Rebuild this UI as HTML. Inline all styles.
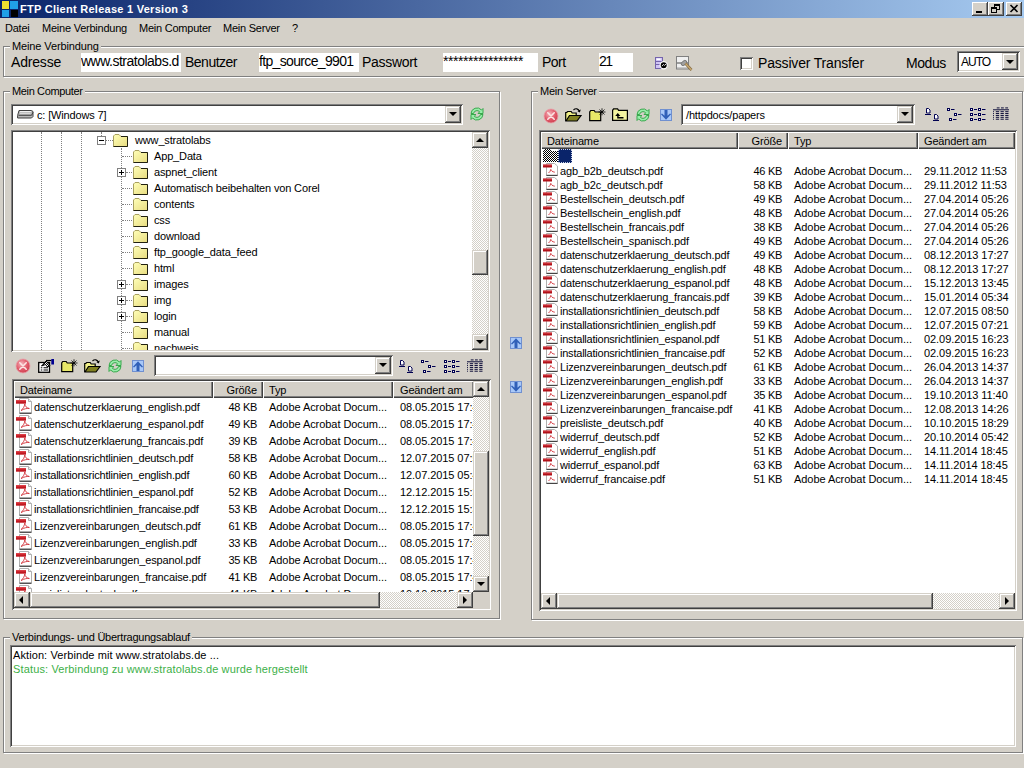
<!DOCTYPE html>
<html lang="de"><head><meta charset="utf-8"><title>FTP Client Release 1 Version 3</title>
<style>
*{box-sizing:border-box;margin:0;padding:0}
html,body{width:1024px;height:768px;overflow:hidden;background:#d4d0c8}
body{position:relative;font-family:"Liberation Sans","DejaVu Sans",sans-serif;font-size:11px;color:#000;line-height:14px}
.a{position:absolute;white-space:pre}
.t{letter-spacing:-.23px}
.l{letter-spacing:-.15px}
.big{font-size:14px;line-height:20px;letter-spacing:-.18px}
.inp{background:#fff;height:19px;top:53px;font-size:14px;line-height:17px;overflow:hidden;padding-left:0;letter-spacing:-.5px}
.title{left:0;top:0;width:1024px;height:18px;background:linear-gradient(90deg,#0a246a 0%,#a6caf0 100%)}
.title span{left:20px;top:0;color:#fff;font-weight:bold;font-size:11px;line-height:18px;letter-spacing:.27px}
.cb{width:16px;height:14px;top:2px;background:#d4d0c8;box-shadow:inset -1px -1px 0 #404040,inset 1px 1px 0 #fff,inset -2px -2px 0 #808080,inset 2px 2px 0 #d4d0c8}
.gb{border:1px solid #808080;box-shadow:inset 1px 1px 0 #fff,1px 1px 0 #fff}
.gl{background:#d4d0c8;padding:0 2px;line-height:14px}
.sunk{background:#fff;box-shadow:inset 1px 1px 0 #808080,inset -1px -1px 0 #fff,inset 2px 2px 0 #404040,inset -2px -2px 0 #d4d0c8}
.btn{background:#d4d0c8;box-shadow:inset -1px -1px 0 #404040,inset 1px 1px 0 #d4d0c8,inset -2px -2px 0 #808080,inset 2px 2px 0 #fff}
.trk{background:repeating-conic-gradient(#fff 0% 25%,#d4d0c8 0% 50%) 0 0/2px 2px}
.hd{background:#d4d0c8;height:17px;line-height:14px;box-shadow:inset 1px 1px 0 #fff,inset -1px -1px 0 #404040,inset -2px -2px 0 #808080;padding-top:2px}
.ar{width:0;height:0;border:4px solid transparent}
.ar.d{border-top-color:#000;border-bottom:0;border-left-width:4px;border-right-width:4px}
.ar.u{border-bottom-color:#000;border-top:0}
.ar.r{border-left-color:#000;border-right:0}
.ar.lf{border-right-color:#000;border-left:0}
.vd{width:0;border-left:1px dotted #808080}
.hdot{height:0;border-top:1px dotted #808080}
.pm{width:9px;height:9px;border:1px solid #808080;background:#fff}
.pm i{position:absolute;left:1px;top:3px;width:5px;height:1px;background:#000}
.pm b{position:absolute;left:3px;top:1px;width:1px;height:5px;background:#000}
.r{text-align:right}
svg{position:absolute;overflow:visible}
</style></head>
<body>
<svg width="0" height="0" style="left:0;top:0"><defs>
<pattern id="chk" width="2" height="2" patternUnits="userSpaceOnUse"><rect width="2" height="2" fill="#fff"/><rect width="1" height="1" fill="#000"/><rect x="1" y="1" width="1" height="1" fill="#000"/></pattern>
<linearGradient id="fg" x1="0" y1="0" x2="1" y2="1"><stop offset="0" stop-color="#ffffb8"/><stop offset="1" stop-color="#e8dc80"/></linearGradient>
<radialGradient id="rg" cx=".4" cy=".35" r=".7"><stop offset="0" stop-color="#f4b4bc"/><stop offset=".6" stop-color="#e05868"/><stop offset="1" stop-color="#cc4050"/></radialGradient>
<symbol id="fold" viewBox="0 0 15 13"><path d="M.5 12.500V2l1.500-1.500h4l2 2h6.500v10z" fill="url(#fg)" stroke="#a8a060" stroke-width="1"/><path d="M8 2.500h6.500v10h-14" fill="none" stroke="#202010" stroke-width="1"/></symbol>
<symbol id="pdf" viewBox="0 0 16 16"><path d="M3.5 .5h9l3 3v11.5h-12z" fill="#fff" stroke="#b0b0b0"/><path d="M3.5 15.3h12" stroke="#444" stroke-width="1.2"/><path d="M12.5 .5v3h3" fill="#eee" stroke="#b0b0b0"/><rect x="0" y="2.200" width="10" height="3.500" fill="#c01820"/><rect x="0" y="2.200" width="10" height="1.200" fill="#e04048"/><path d="M5 12.5c2-1.5 3.5-4 3.8-6.5c.3 2 1.5 4 4.5 4.5c-2.500-.3-5 .3-8.300 2z" fill="none" stroke="#d03038" stroke-width=".9"/></symbol>
<symbol id="pdfs" viewBox="0 0 15 13"><path d="M3.500 .5h8l3 2.500v9.500h-11z" fill="#fff" stroke="#b0b0b0"/><path d="M3.500 12.400h11" stroke="#444" stroke-width="1.200"/><rect x="0" y="1.600" width="9" height="2.900" fill="#b01018"/><rect x="0" y="1.600" width="9" height="1" fill="#d84048"/><path d="M5.500 10c1.200-.8 2-2.200 2.300-3.600c.4 1.400 1.500 2.400 4 2.800" fill="none" stroke="#d03038" stroke-width=".9"/></symbol>
<symbol id="del" viewBox="0 0 16 16"><circle cx="8" cy="8" r="7" fill="url(#rg)" stroke="#e8a0a8" stroke-width=".8"/><path d="M4.800 4.800l6.400 6.400M11.200 4.800l-6.400 6.400" stroke="#fce4e4" stroke-width="1.600" stroke-linecap="round"/></symbol>
<symbol id="refr" viewBox="0 0 16 16"><path d="M2 7.500a6 6 0 0 1 10.500-3.500l1.500-1.500v5h-5l1.700-1.700a3.600 3.600 0 0 0-6.200 1.700z" fill="#98eeaa" stroke="#38a84c" stroke-width="1"/><path d="M14 8.500a6 6 0 0 1-10.500 3.500l-1.500 1.500v-5h5l-1.700 1.700a3.600 3.600 0 0 0 6.200-1.700z" fill="#98eeaa" stroke="#38a84c" stroke-width="1"/></symbol>
<symbol id="upb" viewBox="0 0 12 12"><rect x=".5" y=".5" width="11" height="11" fill="#a8c8f8" stroke="#7090d0"/><path d="M6 1.200l5 5.600l-1 .8l-2.500-2.300v5.700h-3v-5.700l-2.500 2.300l-1-.8z" fill="#3060b8"/></symbol>
<symbol id="dnb" viewBox="0 0 12 12"><rect x=".5" y=".5" width="11" height="11" fill="#a8c8f8" stroke="#7090d0"/><path d="M6 10.800l5-5.600l-1-.8l-2.500 2.300v-5.700h-3v5.700l-2.500-2.300l-1 .8z" fill="#3060b8"/></symbol>
<symbol id="newf" viewBox="0 0 17 14"><path d="M.7 12.700V4l1-1.500h3.500l1 1.500h5.500v8.700z" fill="#e8e868" stroke="#000" stroke-width="1.200"/><path d="M10.500 1.500l5 5M15.500 1.500l-5 5M9.500 4h7M13 .3v7" stroke="#000" stroke-width=".8"/></symbol>
<symbol id="openf" viewBox="0 0 17 14"><path d="M.7 13V4.500h1l1-1h3.500l1 1.500h4v2.500" fill="#f0f088" stroke="#000" stroke-width="1.200"/><path d="M1 13l3.500-5.500h11.500l-4 5.500z" fill="#808020" stroke="#000" stroke-width="1.200"/><path d="M8.500 2c2-2 5-1.500 6 1.500" fill="none" stroke="#000" stroke-width="1.100"/><path d="M15.800 1.500l-1 3l-2.500-1.500z" fill="#000"/></symbol>
<symbol id="upf" viewBox="0 0 16 13"><path d="M.6 12.400V2.300l1-1.500h4l1 1.500h8.800v10.100z" fill="#f4f4a0" stroke="#000" stroke-width="1.200"/><path d="M5.800 5l-2.600 3h2v2.500h6.300v-1.400h-4.900v-1.100h1.800z" fill="#000"/></symbol>
<symbol id="prop" viewBox="0 0 17 15"><rect x=".7" y="3.500" width="10.800" height="9.800" fill="#fff" stroke="#000" stroke-width="1.300"/><path d="M2.800 8.800h1.500M5.500 8.800h4.500M2.800 11h1.500M5.500 11h4.500" stroke="#000" stroke-width="1.100"/><path d="M3.500 7l4.500-5l4 4.500l-2.500 1.500l-2-2.500z" fill="url(#chk)" stroke="#000" stroke-width="1"/><path d="M8 1.500h5.500" stroke="#000" stroke-width="1.200"/><rect x="13.300" y="0" width="2.700" height="5.500" fill="#000090"/></symbol>
<symbol id="v1" viewBox="0 0 16 15"><g fill="#fff" stroke="#000050" stroke-width="1"><path d="M1.500 1.500h2l1.500 1.500v3h-3.500z"/><path d="M0 7.500h6"/><path d="M9.500 7.500h2l1.500 1.500v3h-3.500z"/><path d="M8 13.500h6"/></g></symbol>
<symbol id="v2" viewBox="0 0 16 15"><g fill="#fff" stroke="#000050"><rect x=".5" y="1.500" width="2" height="2"/><rect x="7.500" y="6.500" width="2" height="2"/><rect x="2.500" y="11.500" width="2" height="2"/><path d="M4 2.500h3.500M11 7.500h3.500M6 12.500h3.500"/></g></symbol>
<symbol id="v3" viewBox="0 0 16 15"><g fill="#fff" stroke="#000050"><rect x=".5" y="1.500" width="2" height="2"/><rect x=".5" y="6.500" width="2" height="2"/><rect x=".5" y="11.500" width="2" height="2"/><rect x="8.500" y="1.500" width="2" height="2"/><rect x="8.500" y="6.500" width="2" height="2"/><rect x="8.500" y="11.500" width="2" height="2"/><path d="M4 2.500h3M4 7.500h3M4 12.500h3M12 2.500h3.500M12 7.500h3.500M12 12.500h3.500"/></g></symbol>
<symbol id="v4" viewBox="0 0 17 15"><g stroke="#000030" stroke-width="1" fill="none"><path d="M4 .5h3M8.500 .5h3M13 .5h3"/><path d="M0 2.500h17"/><path d="M0 4.500h1M3 4.500h3.500M8 4.500h3.500M13 4.500h3.500M0 6.500h1M3 6.500h3.500M8 6.500h3.500M13 6.500h3.500M0 8.500h1M3 8.500h3.500M8 8.500h3.500M13 8.500h3.500M0 10.500h1M3 10.500h3.500M8 10.500h3.500M13 10.500h3.500M0 12.500h1M3 12.500h3.500M8 12.500h3.500M13 12.500h3.500"/></g></symbol>
</defs></svg>
<div class="a title"><span class="a">FTP Client Release 1 Version 3</span></div>
<div class="a " style="left:2px;top:1px;width:7px;height:8px;background:#f0e030"></div>
<div class="a " style="left:10px;top:1px;width:8px;height:8px;background:#20a0e8"></div>
<div class="a " style="left:2px;top:10px;width:7px;height:7px;background:#20a0e8"></div>
<div class="a " style="left:11px;top:10px;width:7px;height:7px;background:#000"></div>
<div class="a cb" style="left:972px;top:2px;width:16px;height:14px;"><i class="a" style="left:4px;top:9px;width:6px;height:2px;background:#000"></i></div>
<div class="a cb" style="left:988px;top:2px;width:16px;height:14px;"><i class="a" style="left:6px;top:2px;width:6px;height:6px;border:1px solid #000;border-top-width:2px"></i><i class="a" style="left:3px;top:5px;width:6px;height:6px;border:1px solid #000;border-top-width:2px;background:#d4d0c8"></i></div>
<div class="a cb" style="left:1006px;top:2px;width:16px;height:14px;"><svg style="left:4px;top:3px" width="8" height="7"><path d="M0 0l7 7M7 0l-7 7" stroke="#000" stroke-width="1.600" transform="translate(.5 0)"/></svg></div>
<div class="a t" style="left:5px;top:21px;">Datei</div>
<div class="a t" style="left:42px;top:21px;">Meine Verbindung</div>
<div class="a t" style="left:139px;top:21px;">Mein Computer</div>
<div class="a t" style="left:223px;top:21px;">Mein Server</div>
<div class="a t" style="left:292px;top:21px;">?</div>
<div class="a gb" style="left:3px;top:46px;width:1030px;height:31px;"></div>
<div class="a gl t" style="left:10px;top:39px;letter-spacing:-0.12px">Meine Verbindung</div>
<div class="a gb" style="left:3px;top:91px;width:497px;height:528px;"></div>
<div class="a gl t" style="left:10px;top:84px;letter-spacing:-0.36px">Mein Computer</div>
<div class="a gb" style="left:531px;top:91px;width:492px;height:529px;"></div>
<div class="a gl t" style="left:538px;top:84px;">Mein Server</div>
<div class="a gb" style="left:3px;top:637px;width:1020px;height:116px;"></div>
<div class="a gl t" style="left:10px;top:630px;">Verbindungs- und Übertragungsablauf</div>
<div class="a big" style="left:11px;top:52px;">Adresse</div>
<div class="a inp" style="left:81px;top:53px;width:100px;height:19px;">www.stratolabs.d</div>
<div class="a big" style="left:185px;top:52px;letter-spacing:-.5px">Benutzer</div>
<div class="a inp" style="left:259px;top:53px;width:100px;height:19px;letter-spacing:-.66px">ftp_source_9901</div>
<div class="a big" style="left:362px;top:52px;letter-spacing:-.3px">Passwort</div>
<div class="a inp" style="left:443px;top:53px;width:95px;height:19px;letter-spacing:-.45px">****************</div>
<div class="a big" style="left:542px;top:52px;letter-spacing:-.5px">Port</div>
<div class="a inp" style="left:599px;top:53px;width:34px;height:19px;letter-spacing:-1.6px">21</div>
<svg style="left:654px;top:56px" width="16" height="15"><rect x="1.500" y="1.500" width="7" height="11" fill="#d0c4f4" stroke="#7464ac"/><path d="M2 5.500h6M2 8.500h6" stroke="#7464ac"/><rect x="2.500" y="2.500" width="4" height="1.500" fill="#fff"/><circle cx="9.700" cy="9.200" r="3.600" fill="#000" stroke="#fff" stroke-width="1.200"/><path d="M8 10.200l1.500-1.800l1 1l1.500-1.400" stroke="#e0e0e0" stroke-width="1" fill="none"/></svg>
<svg style="left:676px;top:55px" width="17" height="16"><rect x=".5" y="1.500" width="12" height="12.500" fill="#f0f0f0" stroke="#808080"/><path d="M1 8h11" stroke="#808080" stroke-width="1.500"/><path d="M1 13h11" stroke="#a0a0a0" stroke-width="1"/><ellipse cx="8" cy="8" rx="3.200" ry="2" transform="rotate(-40 8 8)" fill="#a0a0a0" stroke="#707070" stroke-width=".8"/><path d="M9.500 8.500l6 6.500" stroke="#806840" stroke-width="2.600"/><path d="M9.500 8.500l6 6.500" stroke="#c8a870" stroke-width="1.400"/></svg>
<div class="a sunk" style="left:740px;top:57px;width:13px;height:13px;"></div>
<div class="a big" style="left:758px;top:53px;">Passiver Transfer</div>
<div class="a big" style="left:906px;top:53px;letter-spacing:-.45px">Modus</div>
<div class="a sunk" style="left:957px;top:51px;width:63px;height:21px;"></div>
<div class="a " style="left:961px;top:54px;font-size:12px;line-height:16px;letter-spacing:-1px">AUTO</div>
<div class="a btn" style="left:1002px;top:53px;width:16px;height:17px;"></div>
<div class="a ar d" style="left:1006px;top:60px"></div>
<div class="a sunk" style="left:11px;top:104px;width:452px;height:21px;"></div>
<div class="a btn" style="left:445px;top:106px;width:16px;height:17px;"></div>
<div class="a ar d" style="left:449px;top:112px"></div>
<svg style="left:17px;top:109px" width="17" height="10"><path d="M.6 6.500l1.400-5h12.500l1.500 1v5l-1.500 1.500h-13.900z" fill="#b8b8b8" stroke="#404040"/><path d="M1.500 6.300h13l1.500-3" stroke="#404040" fill="none"/><path d="M3 2.500h11" stroke="#f0f0f0"/><path d="M3 4.300h10.500" stroke="#e0e0e0"/></svg>
<div class="a l" style="left:37px;top:108px;">c: [Windows 7]</div>
<svg style="left:469px;top:106px" width="16" height="16"><use href="#refr" width="16" height="16"/></svg>
<div class="a sunk" style="left:11px;top:130px;width:479px;height:222px;"></div>
<div class="a vd" style="left:41px;top:132px;width:0px;height:218px;"></div>
<div class="a vd" style="left:61px;top:132px;width:0px;height:218px;"></div>
<div class="a vd" style="left:81px;top:132px;width:0px;height:218px;"></div>
<div class="a vd" style="left:101px;top:132px;width:0px;height:4px;"></div>
<div class="a vd" style="left:121px;top:148px;width:0px;height:202px;"></div>
<div class="a hdot" style="left:106px;top:140px;width:7px;height:0px;"></div>
<div class="a pm" style="left:97px;top:136px;width:9px;height:9px;"><i></i></div>
<svg style="left:113px;top:134px" width="15" height="13"><use href="#fold" width="15" height="13"/></svg>
<div class="a l" style="left:135px;top:132px;line-height:16px">www_stratolabs</div>
<div class="a hdot" style="left:122px;top:156px;width:10px;height:0px;"></div>
<svg style="left:133px;top:150px" width="15" height="13"><use href="#fold" width="15" height="13"/></svg>
<div class="a l" style="left:154px;top:148px;line-height:16px">App_Data</div>
<div class="a hdot" style="left:126px;top:172px;width:6px;height:0px;"></div>
<div class="a pm" style="left:117px;top:168px;width:9px;height:9px;"><i></i><b></b></div>
<svg style="left:133px;top:166px" width="15" height="13"><use href="#fold" width="15" height="13"/></svg>
<div class="a l" style="left:154px;top:164px;line-height:16px">aspnet_client</div>
<div class="a hdot" style="left:122px;top:188px;width:10px;height:0px;"></div>
<svg style="left:133px;top:182px" width="15" height="13"><use href="#fold" width="15" height="13"/></svg>
<div class="a l" style="left:154px;top:180px;line-height:16px">Automatisch beibehalten von Corel</div>
<div class="a hdot" style="left:122px;top:204px;width:10px;height:0px;"></div>
<svg style="left:133px;top:198px" width="15" height="13"><use href="#fold" width="15" height="13"/></svg>
<div class="a l" style="left:154px;top:196px;line-height:16px">contents</div>
<div class="a hdot" style="left:122px;top:220px;width:10px;height:0px;"></div>
<svg style="left:133px;top:214px" width="15" height="13"><use href="#fold" width="15" height="13"/></svg>
<div class="a l" style="left:154px;top:212px;line-height:16px">css</div>
<div class="a hdot" style="left:122px;top:236px;width:10px;height:0px;"></div>
<svg style="left:133px;top:230px" width="15" height="13"><use href="#fold" width="15" height="13"/></svg>
<div class="a l" style="left:154px;top:228px;line-height:16px">download</div>
<div class="a hdot" style="left:122px;top:252px;width:10px;height:0px;"></div>
<svg style="left:133px;top:246px" width="15" height="13"><use href="#fold" width="15" height="13"/></svg>
<div class="a l" style="left:154px;top:244px;line-height:16px">ftp_google_data_feed</div>
<div class="a hdot" style="left:122px;top:268px;width:10px;height:0px;"></div>
<svg style="left:133px;top:262px" width="15" height="13"><use href="#fold" width="15" height="13"/></svg>
<div class="a l" style="left:154px;top:260px;line-height:16px">html</div>
<div class="a hdot" style="left:126px;top:284px;width:6px;height:0px;"></div>
<div class="a pm" style="left:117px;top:280px;width:9px;height:9px;"><i></i><b></b></div>
<svg style="left:133px;top:278px" width="15" height="13"><use href="#fold" width="15" height="13"/></svg>
<div class="a l" style="left:154px;top:276px;line-height:16px">images</div>
<div class="a hdot" style="left:126px;top:300px;width:6px;height:0px;"></div>
<div class="a pm" style="left:117px;top:296px;width:9px;height:9px;"><i></i><b></b></div>
<svg style="left:133px;top:294px" width="15" height="13"><use href="#fold" width="15" height="13"/></svg>
<div class="a l" style="left:154px;top:292px;line-height:16px">img</div>
<div class="a hdot" style="left:126px;top:316px;width:6px;height:0px;"></div>
<div class="a pm" style="left:117px;top:312px;width:9px;height:9px;"><i></i><b></b></div>
<svg style="left:133px;top:310px" width="15" height="13"><use href="#fold" width="15" height="13"/></svg>
<div class="a l" style="left:154px;top:308px;line-height:16px">login</div>
<div class="a hdot" style="left:122px;top:332px;width:10px;height:0px;"></div>
<svg style="left:133px;top:326px" width="15" height="13"><use href="#fold" width="15" height="13"/></svg>
<div class="a l" style="left:154px;top:324px;line-height:16px">manual</div>
<div class="a" style="left:13px;top:340px;width:459px;height:10px;overflow:hidden"><div class="a hdot" style="left:109px;top:8px;width:10px"></div><svg style="left:120px;top:2px" width="15" height="13"><use href="#fold" width="15" height="13"/></svg><div class="a l" style="left:141px;top:0;line-height:16px">nachweis</div></div>
<div class="a trk" style="left:472px;top:132px;width:16px;height:218px;"></div>
<div class="a btn" style="left:472px;top:132px;width:16px;height:16px;"></div>
<div class="a ar u" style="left:476px;top:138px"></div>
<div class="a btn" style="left:472px;top:334px;width:16px;height:16px;"></div>
<div class="a ar d" style="left:476px;top:340px"></div>
<div class="a btn" style="left:472px;top:250px;width:16px;height:25px;"></div>
<svg style="left:15px;top:358px" width="16" height="16"><use href="#del" width="16" height="16"/></svg>
<svg style="left:38px;top:359px" width="17" height="15"><use href="#prop" width="17" height="15"/></svg>
<svg style="left:61px;top:359px" width="17" height="14"><use href="#newf" width="17" height="14"/></svg>
<svg style="left:84px;top:359px" width="17" height="14"><use href="#openf" width="17" height="14"/></svg>
<svg style="left:107px;top:358px" width="16" height="16"><use href="#refr" width="16" height="16"/></svg>
<svg style="left:132px;top:360px" width="12" height="12"><use href="#upb" width="12" height="12"/></svg>
<div class="a sunk" style="left:154px;top:355px;width:239px;height:21px;"></div>
<div class="a btn" style="left:375px;top:357px;width:16px;height:17px;"></div>
<div class="a ar d" style="left:379px;top:363px"></div>
<svg style="left:399px;top:359px" width="16" height="15"><use href="#v1" width="16" height="15"/></svg>
<svg style="left:421px;top:359px" width="16" height="15"><use href="#v2" width="16" height="15"/></svg>
<svg style="left:444px;top:359px" width="16" height="15"><use href="#v3" width="16" height="15"/></svg>
<svg style="left:467px;top:359px" width="16" height="15"><use href="#v4" width="16" height="15"/></svg>
<div class="a sunk" style="left:12px;top:379px;width:479px;height:231px;"></div>
<div class="a hd l" style="left:14px;top:381px;width:199px;padding-left:6px">Dateiname</div>
<div class="a hd l" style="left:213px;top:381px;width:50px;padding-right:6px;text-align:right">Größe</div>
<div class="a hd l" style="left:263px;top:381px;width:130px;padding-left:6px">Typ</div>
<div class="a hd l" style="left:393px;top:381px;width:81px;padding-left:7px">Geändert am</div>
<div class="a" style="left:14px;top:398px;width:459px;height:194px;overflow:hidden">
<svg style="left:2px;top:0px" width="16" height="16"><use href="#pdf" width="16" height="16"/></svg><div class="a l" style="left:20px;top:1px;line-height:17px;">datenschutzerklaerung_english.pdf</div><div class="a r" style="left:199px;top:1px;width:44px;line-height:17px;letter-spacing:-.3px">48 KB</div><div class="a" style="left:255px;top:1px;line-height:17px;letter-spacing:-.06px">Adobe Acrobat Docum...</div><div class="a" style="left:386px;top:1px;line-height:17px;letter-spacing:-.07px">08.05.2015 17:46</div>
<svg style="left:2px;top:17px" width="16" height="16"><use href="#pdf" width="16" height="16"/></svg><div class="a l" style="left:20px;top:18px;line-height:17px;">datenschutzerklaerung_espanol.pdf</div><div class="a r" style="left:199px;top:18px;width:44px;line-height:17px;letter-spacing:-.3px">49 KB</div><div class="a" style="left:255px;top:18px;line-height:17px;letter-spacing:-.06px">Adobe Acrobat Docum...</div><div class="a" style="left:386px;top:18px;line-height:17px;letter-spacing:-.07px">08.05.2015 17:46</div>
<svg style="left:2px;top:34px" width="16" height="16"><use href="#pdf" width="16" height="16"/></svg><div class="a l" style="left:20px;top:35px;line-height:17px;">datenschutzerklaerung_francais.pdf</div><div class="a r" style="left:199px;top:35px;width:44px;line-height:17px;letter-spacing:-.3px">39 KB</div><div class="a" style="left:255px;top:35px;line-height:17px;letter-spacing:-.06px">Adobe Acrobat Docum...</div><div class="a" style="left:386px;top:35px;line-height:17px;letter-spacing:-.07px">08.05.2015 17:46</div>
<svg style="left:2px;top:51px" width="16" height="16"><use href="#pdf" width="16" height="16"/></svg><div class="a l" style="left:20px;top:52px;line-height:17px;letter-spacing:-.22px;">installationsrichtlinien_deutsch.pdf</div><div class="a r" style="left:199px;top:52px;width:44px;line-height:17px;letter-spacing:-.3px">58 KB</div><div class="a" style="left:255px;top:52px;line-height:17px;letter-spacing:-.06px">Adobe Acrobat Docum...</div><div class="a" style="left:386px;top:52px;line-height:17px;letter-spacing:-.07px">12.07.2015 07:50</div>
<svg style="left:2px;top:68px" width="16" height="16"><use href="#pdf" width="16" height="16"/></svg><div class="a l" style="left:20px;top:69px;line-height:17px;letter-spacing:-.22px;">installationsrichtlinien_english.pdf</div><div class="a r" style="left:199px;top:69px;width:44px;line-height:17px;letter-spacing:-.3px">60 KB</div><div class="a" style="left:255px;top:69px;line-height:17px;letter-spacing:-.06px">Adobe Acrobat Docum...</div><div class="a" style="left:386px;top:69px;line-height:17px;letter-spacing:-.07px">12.07.2015 05:41</div>
<svg style="left:2px;top:85px" width="16" height="16"><use href="#pdf" width="16" height="16"/></svg><div class="a l" style="left:20px;top:86px;line-height:17px;letter-spacing:-.22px;">installationsrichtlinien_espanol.pdf</div><div class="a r" style="left:199px;top:86px;width:44px;line-height:17px;letter-spacing:-.3px">52 KB</div><div class="a" style="left:255px;top:86px;line-height:17px;letter-spacing:-.06px">Adobe Acrobat Docum...</div><div class="a" style="left:386px;top:86px;line-height:17px;letter-spacing:-.07px">12.12.2015 15:33</div>
<svg style="left:2px;top:102px" width="16" height="16"><use href="#pdf" width="16" height="16"/></svg><div class="a l" style="left:20px;top:103px;line-height:17px;letter-spacing:-.22px;">installationsrichtlinien_francaise.pdf</div><div class="a r" style="left:199px;top:103px;width:44px;line-height:17px;letter-spacing:-.3px">53 KB</div><div class="a" style="left:255px;top:103px;line-height:17px;letter-spacing:-.06px">Adobe Acrobat Docum...</div><div class="a" style="left:386px;top:103px;line-height:17px;letter-spacing:-.07px">12.12.2015 15:33</div>
<svg style="left:2px;top:119px" width="16" height="16"><use href="#pdf" width="16" height="16"/></svg><div class="a l" style="left:20px;top:120px;line-height:17px;">Lizenzvereinbarungen_deutsch.pdf</div><div class="a r" style="left:199px;top:120px;width:44px;line-height:17px;letter-spacing:-.3px">61 KB</div><div class="a" style="left:255px;top:120px;line-height:17px;letter-spacing:-.06px">Adobe Acrobat Docum...</div><div class="a" style="left:386px;top:120px;line-height:17px;letter-spacing:-.07px">08.05.2015 17:46</div>
<svg style="left:2px;top:136px" width="16" height="16"><use href="#pdf" width="16" height="16"/></svg><div class="a l" style="left:20px;top:137px;line-height:17px;">Lizenzvereinbarungen_english.pdf</div><div class="a r" style="left:199px;top:137px;width:44px;line-height:17px;letter-spacing:-.3px">33 KB</div><div class="a" style="left:255px;top:137px;line-height:17px;letter-spacing:-.06px">Adobe Acrobat Docum...</div><div class="a" style="left:386px;top:137px;line-height:17px;letter-spacing:-.07px">08.05.2015 17:46</div>
<svg style="left:2px;top:153px" width="16" height="16"><use href="#pdf" width="16" height="16"/></svg><div class="a l" style="left:20px;top:154px;line-height:17px;">Lizenzvereinbarungen_espanol.pdf</div><div class="a r" style="left:199px;top:154px;width:44px;line-height:17px;letter-spacing:-.3px">35 KB</div><div class="a" style="left:255px;top:154px;line-height:17px;letter-spacing:-.06px">Adobe Acrobat Docum...</div><div class="a" style="left:386px;top:154px;line-height:17px;letter-spacing:-.07px">08.05.2015 17:46</div>
<svg style="left:2px;top:170px" width="16" height="16"><use href="#pdf" width="16" height="16"/></svg><div class="a l" style="left:20px;top:171px;line-height:17px;">Lizenzvereinbarungen_francaise.pdf</div><div class="a r" style="left:199px;top:171px;width:44px;line-height:17px;letter-spacing:-.3px">41 KB</div><div class="a" style="left:255px;top:171px;line-height:17px;letter-spacing:-.06px">Adobe Acrobat Docum...</div><div class="a" style="left:386px;top:171px;line-height:17px;letter-spacing:-.07px">08.05.2015 17:46</div>
<svg style="left:2px;top:187px" width="16" height="16"><use href="#pdf" width="16" height="16"/></svg><div class="a l" style="left:20px;top:188px;line-height:17px;">preisliste_deutsch.pdf</div><div class="a r" style="left:199px;top:188px;width:44px;line-height:17px;letter-spacing:-.3px">41 KB</div><div class="a" style="left:255px;top:188px;line-height:17px;letter-spacing:-.06px">Adobe Acrobat Docum...</div><div class="a" style="left:386px;top:188px;line-height:17px;letter-spacing:-.07px">10.10.2015 17:46</div>
</div>
<div class="a trk" style="left:473px;top:381px;width:16px;height:211px;"></div>
<div class="a btn" style="left:473px;top:381px;width:16px;height:16px;"></div>
<div class="a ar u" style="left:477px;top:387px"></div>
<div class="a btn" style="left:473px;top:576px;width:16px;height:16px;"></div>
<div class="a ar d" style="left:477px;top:582px"></div>
<div class="a btn" style="left:473px;top:451px;width:16px;height:85px;"></div>
<div class="a trk" style="left:14px;top:592px;width:459px;height:16px;"></div>
<div class="a btn" style="left:14px;top:592px;width:16px;height:16px;"></div>
<div class="a ar lf" style="left:19px;top:596px"></div>
<div class="a btn" style="left:457px;top:592px;width:16px;height:16px;"></div>
<div class="a ar r" style="left:463px;top:596px"></div>
<div class="a btn" style="left:30px;top:592px;width:350px;height:16px;"></div>
<div class="a " style="left:473px;top:592px;width:16px;height:16px;background:#d4d0c8"></div>
<svg style="left:510px;top:337px" width="12" height="12"><use href="#upb" width="12" height="12"/></svg>
<svg style="left:510px;top:381px" width="12" height="12"><use href="#dnb" width="12" height="12"/></svg>
<svg style="left:543px;top:107.5px" width="16" height="16"><use href="#del" width="16" height="16"/></svg>
<svg style="left:565px;top:108px" width="17" height="14"><use href="#openf" width="17" height="14"/></svg>
<svg style="left:589px;top:108px" width="17" height="14"><use href="#newf" width="17" height="14"/></svg>
<svg style="left:612px;top:108px" width="16" height="13"><use href="#upf" width="16" height="13"/></svg>
<svg style="left:635px;top:107px" width="16" height="16"><use href="#refr" width="16" height="16"/></svg>
<svg style="left:660px;top:109px" width="12" height="12"><use href="#dnb" width="12" height="12"/></svg>
<div class="a sunk" style="left:681px;top:104px;width:234px;height:21px;"></div>
<div class="a btn" style="left:897px;top:106px;width:16px;height:17px;"></div>
<div class="a ar d" style="left:901px;top:112px"></div>
<div class="a l" style="left:686px;top:108px;">/httpdocs/papers</div>
<svg style="left:925px;top:107px" width="16" height="15"><use href="#v1" width="16" height="15"/></svg>
<svg style="left:947px;top:107px" width="16" height="15"><use href="#v2" width="16" height="15"/></svg>
<svg style="left:970px;top:107px" width="16" height="15"><use href="#v3" width="16" height="15"/></svg>
<svg style="left:993px;top:107px" width="16" height="15"><use href="#v4" width="16" height="15"/></svg>
<div class="a sunk" style="left:539px;top:130px;width:478px;height:481px;"></div>
<div class="a hd l" style="left:541px;top:132px;width:197px;padding-left:6px">Dateiname</div>
<div class="a hd l" style="left:738px;top:132px;width:50px;padding-right:6px;text-align:right">Größe</div>
<div class="a hd l" style="left:788px;top:132px;width:130px;padding-left:6px">Typ</div>
<div class="a hd l" style="left:918px;top:132px;width:97px;padding-left:6px">Geändert am</div>
<div class="a" style="left:541px;top:149px;width:474px;height:444px;overflow:hidden">
<svg style="left:2px;top:14px" width="15" height="13"><use href="#pdfs" width="15" height="13"/></svg><div class="a l" style="left:19px;top:15px;line-height:14px;">agb_b2b_deutsch.pdf</div><div class="a r" style="left:197px;top:15px;width:44px;line-height:14px;letter-spacing:-.3px">46 KB</div><div class="a" style="left:253px;top:15px;line-height:14px;letter-spacing:-.06px">Adobe Acrobat Docum...</div><div class="a" style="left:383px;top:15px;line-height:14px;letter-spacing:-.07px">29.11.2012 11:53</div>
<svg style="left:2px;top:28px" width="15" height="13"><use href="#pdfs" width="15" height="13"/></svg><div class="a l" style="left:19px;top:29px;line-height:14px;">agb_b2c_deutsch.pdf</div><div class="a r" style="left:197px;top:29px;width:44px;line-height:14px;letter-spacing:-.3px">58 KB</div><div class="a" style="left:253px;top:29px;line-height:14px;letter-spacing:-.06px">Adobe Acrobat Docum...</div><div class="a" style="left:383px;top:29px;line-height:14px;letter-spacing:-.07px">29.11.2012 11:53</div>
<svg style="left:2px;top:42px" width="15" height="13"><use href="#pdfs" width="15" height="13"/></svg><div class="a l" style="left:19px;top:43px;line-height:14px;">Bestellschein_deutsch.pdf</div><div class="a r" style="left:197px;top:43px;width:44px;line-height:14px;letter-spacing:-.3px">49 KB</div><div class="a" style="left:253px;top:43px;line-height:14px;letter-spacing:-.06px">Adobe Acrobat Docum...</div><div class="a" style="left:383px;top:43px;line-height:14px;letter-spacing:-.07px">27.04.2014 05:26</div>
<svg style="left:2px;top:56px" width="15" height="13"><use href="#pdfs" width="15" height="13"/></svg><div class="a l" style="left:19px;top:57px;line-height:14px;">Bestellschein_english.pdf</div><div class="a r" style="left:197px;top:57px;width:44px;line-height:14px;letter-spacing:-.3px">48 KB</div><div class="a" style="left:253px;top:57px;line-height:14px;letter-spacing:-.06px">Adobe Acrobat Docum...</div><div class="a" style="left:383px;top:57px;line-height:14px;letter-spacing:-.07px">27.04.2014 05:26</div>
<svg style="left:2px;top:70px" width="15" height="13"><use href="#pdfs" width="15" height="13"/></svg><div class="a l" style="left:19px;top:71px;line-height:14px;">Bestellschein_francais.pdf</div><div class="a r" style="left:197px;top:71px;width:44px;line-height:14px;letter-spacing:-.3px">38 KB</div><div class="a" style="left:253px;top:71px;line-height:14px;letter-spacing:-.06px">Adobe Acrobat Docum...</div><div class="a" style="left:383px;top:71px;line-height:14px;letter-spacing:-.07px">27.04.2014 05:26</div>
<svg style="left:2px;top:84px" width="15" height="13"><use href="#pdfs" width="15" height="13"/></svg><div class="a l" style="left:19px;top:85px;line-height:14px;">Bestellschein_spanisch.pdf</div><div class="a r" style="left:197px;top:85px;width:44px;line-height:14px;letter-spacing:-.3px">49 KB</div><div class="a" style="left:253px;top:85px;line-height:14px;letter-spacing:-.06px">Adobe Acrobat Docum...</div><div class="a" style="left:383px;top:85px;line-height:14px;letter-spacing:-.07px">27.04.2014 05:26</div>
<svg style="left:2px;top:98px" width="15" height="13"><use href="#pdfs" width="15" height="13"/></svg><div class="a l" style="left:19px;top:99px;line-height:14px;">datenschutzerklaerung_deutsch.pdf</div><div class="a r" style="left:197px;top:99px;width:44px;line-height:14px;letter-spacing:-.3px">49 KB</div><div class="a" style="left:253px;top:99px;line-height:14px;letter-spacing:-.06px">Adobe Acrobat Docum...</div><div class="a" style="left:383px;top:99px;line-height:14px;letter-spacing:-.07px">08.12.2013 17:27</div>
<svg style="left:2px;top:112px" width="15" height="13"><use href="#pdfs" width="15" height="13"/></svg><div class="a l" style="left:19px;top:113px;line-height:14px;">datenschutzerklaerung_english.pdf</div><div class="a r" style="left:197px;top:113px;width:44px;line-height:14px;letter-spacing:-.3px">48 KB</div><div class="a" style="left:253px;top:113px;line-height:14px;letter-spacing:-.06px">Adobe Acrobat Docum...</div><div class="a" style="left:383px;top:113px;line-height:14px;letter-spacing:-.07px">08.12.2013 17:27</div>
<svg style="left:2px;top:126px" width="15" height="13"><use href="#pdfs" width="15" height="13"/></svg><div class="a l" style="left:19px;top:127px;line-height:14px;">datenschutzerklaerung_espanol.pdf</div><div class="a r" style="left:197px;top:127px;width:44px;line-height:14px;letter-spacing:-.3px">48 KB</div><div class="a" style="left:253px;top:127px;line-height:14px;letter-spacing:-.06px">Adobe Acrobat Docum...</div><div class="a" style="left:383px;top:127px;line-height:14px;letter-spacing:-.07px">15.12.2013 13:45</div>
<svg style="left:2px;top:140px" width="15" height="13"><use href="#pdfs" width="15" height="13"/></svg><div class="a l" style="left:19px;top:141px;line-height:14px;">datenschutzerklaerung_francais.pdf</div><div class="a r" style="left:197px;top:141px;width:44px;line-height:14px;letter-spacing:-.3px">39 KB</div><div class="a" style="left:253px;top:141px;line-height:14px;letter-spacing:-.06px">Adobe Acrobat Docum...</div><div class="a" style="left:383px;top:141px;line-height:14px;letter-spacing:-.07px">15.01.2014 05:34</div>
<svg style="left:2px;top:154px" width="15" height="13"><use href="#pdfs" width="15" height="13"/></svg><div class="a l" style="left:19px;top:155px;line-height:14px;letter-spacing:-.22px;">installationsrichtlinien_deutsch.pdf</div><div class="a r" style="left:197px;top:155px;width:44px;line-height:14px;letter-spacing:-.3px">58 KB</div><div class="a" style="left:253px;top:155px;line-height:14px;letter-spacing:-.06px">Adobe Acrobat Docum...</div><div class="a" style="left:383px;top:155px;line-height:14px;letter-spacing:-.07px">12.07.2015 08:50</div>
<svg style="left:2px;top:168px" width="15" height="13"><use href="#pdfs" width="15" height="13"/></svg><div class="a l" style="left:19px;top:169px;line-height:14px;letter-spacing:-.22px;">installationsrichtlinien_english.pdf</div><div class="a r" style="left:197px;top:169px;width:44px;line-height:14px;letter-spacing:-.3px">59 KB</div><div class="a" style="left:253px;top:169px;line-height:14px;letter-spacing:-.06px">Adobe Acrobat Docum...</div><div class="a" style="left:383px;top:169px;line-height:14px;letter-spacing:-.07px">12.07.2015 07:21</div>
<svg style="left:2px;top:182px" width="15" height="13"><use href="#pdfs" width="15" height="13"/></svg><div class="a l" style="left:19px;top:183px;line-height:14px;letter-spacing:-.22px;">installationsrichtlinien_espanol.pdf</div><div class="a r" style="left:197px;top:183px;width:44px;line-height:14px;letter-spacing:-.3px">51 KB</div><div class="a" style="left:253px;top:183px;line-height:14px;letter-spacing:-.06px">Adobe Acrobat Docum...</div><div class="a" style="left:383px;top:183px;line-height:14px;letter-spacing:-.07px">02.09.2015 16:23</div>
<svg style="left:2px;top:196px" width="15" height="13"><use href="#pdfs" width="15" height="13"/></svg><div class="a l" style="left:19px;top:197px;line-height:14px;letter-spacing:-.22px;">installationsrichtlinien_francaise.pdf</div><div class="a r" style="left:197px;top:197px;width:44px;line-height:14px;letter-spacing:-.3px">52 KB</div><div class="a" style="left:253px;top:197px;line-height:14px;letter-spacing:-.06px">Adobe Acrobat Docum...</div><div class="a" style="left:383px;top:197px;line-height:14px;letter-spacing:-.07px">02.09.2015 16:23</div>
<svg style="left:2px;top:210px" width="15" height="13"><use href="#pdfs" width="15" height="13"/></svg><div class="a l" style="left:19px;top:211px;line-height:14px;">Lizenzvereinbarungen_deutsch.pdf</div><div class="a r" style="left:197px;top:211px;width:44px;line-height:14px;letter-spacing:-.3px">61 KB</div><div class="a" style="left:253px;top:211px;line-height:14px;letter-spacing:-.06px">Adobe Acrobat Docum...</div><div class="a" style="left:383px;top:211px;line-height:14px;letter-spacing:-.07px">26.04.2013 14:37</div>
<svg style="left:2px;top:224px" width="15" height="13"><use href="#pdfs" width="15" height="13"/></svg><div class="a l" style="left:19px;top:225px;line-height:14px;">Lizenzvereinbarungen_english.pdf</div><div class="a r" style="left:197px;top:225px;width:44px;line-height:14px;letter-spacing:-.3px">33 KB</div><div class="a" style="left:253px;top:225px;line-height:14px;letter-spacing:-.06px">Adobe Acrobat Docum...</div><div class="a" style="left:383px;top:225px;line-height:14px;letter-spacing:-.07px">26.04.2013 14:37</div>
<svg style="left:2px;top:238px" width="15" height="13"><use href="#pdfs" width="15" height="13"/></svg><div class="a l" style="left:19px;top:239px;line-height:14px;">Lizenzvereinbarungen_espanol.pdf</div><div class="a r" style="left:197px;top:239px;width:44px;line-height:14px;letter-spacing:-.3px">35 KB</div><div class="a" style="left:253px;top:239px;line-height:14px;letter-spacing:-.06px">Adobe Acrobat Docum...</div><div class="a" style="left:383px;top:239px;line-height:14px;letter-spacing:-.07px">19.10.2013 11:40</div>
<svg style="left:2px;top:252px" width="15" height="13"><use href="#pdfs" width="15" height="13"/></svg><div class="a l" style="left:19px;top:253px;line-height:14px;">Lizenzvereinbarungen_francaise.pdf</div><div class="a r" style="left:197px;top:253px;width:44px;line-height:14px;letter-spacing:-.3px">41 KB</div><div class="a" style="left:253px;top:253px;line-height:14px;letter-spacing:-.06px">Adobe Acrobat Docum...</div><div class="a" style="left:383px;top:253px;line-height:14px;letter-spacing:-.07px">12.08.2013 14:26</div>
<svg style="left:2px;top:266px" width="15" height="13"><use href="#pdfs" width="15" height="13"/></svg><div class="a l" style="left:19px;top:267px;line-height:14px;">preisliste_deutsch.pdf</div><div class="a r" style="left:197px;top:267px;width:44px;line-height:14px;letter-spacing:-.3px">40 KB</div><div class="a" style="left:253px;top:267px;line-height:14px;letter-spacing:-.06px">Adobe Acrobat Docum...</div><div class="a" style="left:383px;top:267px;line-height:14px;letter-spacing:-.07px">10.10.2015 18:29</div>
<svg style="left:2px;top:280px" width="15" height="13"><use href="#pdfs" width="15" height="13"/></svg><div class="a l" style="left:19px;top:281px;line-height:14px;">widerruf_deutsch.pdf</div><div class="a r" style="left:197px;top:281px;width:44px;line-height:14px;letter-spacing:-.3px">52 KB</div><div class="a" style="left:253px;top:281px;line-height:14px;letter-spacing:-.06px">Adobe Acrobat Docum...</div><div class="a" style="left:383px;top:281px;line-height:14px;letter-spacing:-.07px">20.10.2014 05:42</div>
<svg style="left:2px;top:294px" width="15" height="13"><use href="#pdfs" width="15" height="13"/></svg><div class="a l" style="left:19px;top:295px;line-height:14px;">widerruf_english.pdf</div><div class="a r" style="left:197px;top:295px;width:44px;line-height:14px;letter-spacing:-.3px">51 KB</div><div class="a" style="left:253px;top:295px;line-height:14px;letter-spacing:-.06px">Adobe Acrobat Docum...</div><div class="a" style="left:383px;top:295px;line-height:14px;letter-spacing:-.07px">14.11.2014 18:45</div>
<svg style="left:2px;top:308px" width="15" height="13"><use href="#pdfs" width="15" height="13"/></svg><div class="a l" style="left:19px;top:309px;line-height:14px;">widerruf_espanol.pdf</div><div class="a r" style="left:197px;top:309px;width:44px;line-height:14px;letter-spacing:-.3px">63 KB</div><div class="a" style="left:253px;top:309px;line-height:14px;letter-spacing:-.06px">Adobe Acrobat Docum...</div><div class="a" style="left:383px;top:309px;line-height:14px;letter-spacing:-.07px">14.11.2014 18:45</div>
<svg style="left:2px;top:322px" width="15" height="13"><use href="#pdfs" width="15" height="13"/></svg><div class="a l" style="left:19px;top:323px;line-height:14px;">widerruf_francaise.pdf</div><div class="a r" style="left:197px;top:323px;width:44px;line-height:14px;letter-spacing:-.3px">51 KB</div><div class="a" style="left:253px;top:323px;line-height:14px;letter-spacing:-.06px">Adobe Acrobat Docum...</div><div class="a" style="left:383px;top:323px;line-height:14px;letter-spacing:-.07px">14.11.2014 18:45</div>
</div>
<svg style="left:543px;top:149px" width="15" height="13" shape-rendering="crispEdges"><path d="M0 13V2l2-2h4l2 2h7v11z" fill="url(#chk)"/></svg>
<div class="a " style="left:558px;top:149px;width:14px;height:14px;background:#0a246a;border:1px dotted #c8d0e8"></div>
<div class="a trk" style="left:541px;top:593px;width:474px;height:16px;"></div>
<div class="a btn" style="left:541px;top:593px;width:16px;height:16px;"></div>
<div class="a ar lf" style="left:546px;top:597px"></div>
<div class="a btn" style="left:999px;top:593px;width:16px;height:16px;"></div>
<div class="a ar r" style="left:1005px;top:597px"></div>
<div class="a btn" style="left:557px;top:593px;width:376px;height:16px;"></div>
<div class="a sunk" style="left:10px;top:645px;width:1006px;height:102px;"></div>
<div class="a " style="left:13px;top:648px;letter-spacing:.09px">Aktion: Verbinde mit www.stratolabs.de ...</div>
<div class="a " style="left:13px;top:662px;letter-spacing:.14px;color:#3cb048">Status: Verbindung zu www.stratolabs.de wurde hergestellt</div>
</body></html>
